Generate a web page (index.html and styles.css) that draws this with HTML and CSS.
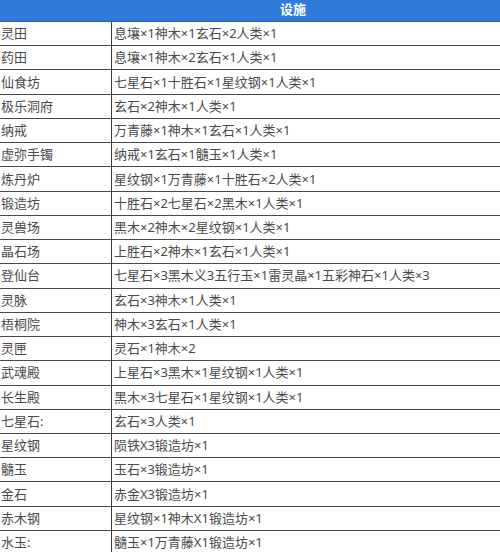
FILE: index.html
```html
<!DOCTYPE html>
<html lang="zh">
<head>
<meta charset="utf-8">
<link rel="stylesheet" href="styles.css">
</head>
<body>
<div class="sheet">
  <div class="head"><span class="head-title">设施</span></div>
  <div class="rows">
    <div class="row"><div class="c1">灵田</div><div class="c2">息壤×1神木×1玄石×2人类×1</div></div>
    <div class="row"><div class="c1">药田</div><div class="c2">息壤×1神木×2玄石×1人类×1</div></div>
    <div class="row"><div class="c1">仙食坊</div><div class="c2">七星石×1十胜石×1星纹钢×1人类×1</div></div>
    <div class="row"><div class="c1">极乐洞府</div><div class="c2">玄石×2神木×1人类×1</div></div>
    <div class="row"><div class="c1">纳戒</div><div class="c2">万青藤×1神木×1玄石×1人类×1</div></div>
    <div class="row"><div class="c1">虚弥手镯</div><div class="c2">纳戒×1玄石×1髓玉×1人类×1</div></div>
    <div class="row"><div class="c1">炼丹炉</div><div class="c2">星纹钢×1万青藤×1十胜石×2人类×1</div></div>
    <div class="row"><div class="c1">锻造坊</div><div class="c2">十胜石×2七星石×2黑木×1人类×1</div></div>
    <div class="row"><div class="c1">灵兽场</div><div class="c2">黑木×2神木×2星纹钢×1人类×1</div></div>
    <div class="row"><div class="c1">晶石场</div><div class="c2">上胜石×2神木×1玄石×1人类×1</div></div>
    <div class="row"><div class="c1">登仙台</div><div class="c2">七星石×3黑木义3五行玉×1雷灵晶×1五彩神石×1人类×3</div></div>
    <div class="row"><div class="c1">灵脉</div><div class="c2">玄石×3神木×1人类×1</div></div>
    <div class="row"><div class="c1">梧桐院</div><div class="c2">神木×3玄石×1人类×1</div></div>
    <div class="row"><div class="c1">灵匣</div><div class="c2">灵石×1神木×2</div></div>
    <div class="row"><div class="c1">武魂殿</div><div class="c2">上星石×3黑木×1星纹钢×1人类×1</div></div>
    <div class="row"><div class="c1">长生殿</div><div class="c2">黑木×3七星石×1星纹钢×1人类×1</div></div>
    <div class="row"><div class="c1">七星石:</div><div class="c2">玄石×3人类×1</div></div>
    <div class="row"><div class="c1">星纹钢</div><div class="c2">陨铁X3锻造坊×1</div></div>
    <div class="row"><div class="c1">髓玉</div><div class="c2">玉石×3锻造坊×1</div></div>
    <div class="row"><div class="c1">金石</div><div class="c2">赤金X3锻造坊×1</div></div>
    <div class="row"><div class="c1">赤木钢</div><div class="c2">星纹钢×1神木X1锻造坊×1</div></div>
    <div class="row"><div class="c1">水玉:</div><div class="c2">髓玉×1万青藤X1锻造坊×1</div></div>
  </div>
</div>
</body>
</html>
```

FILE: styles.css
```css
html, body {
  margin: 0;
  padding: 0;
  background: #ffffff;
}
body {
  width: 500px;
  height: 552px;
  overflow: hidden;
  font-family: "Noto Sans", "Noto Sans CJK SC", sans-serif;
  font-size: 13px;
  color: #4a4a4a;
}
.sheet {
  display: flex;
  flex-direction: column;
}
.head {
  height: 21px;
  background: #2f7bd9;
  border-bottom: 1px solid #1f5eb0;
  display: flex;
  align-items: center;
  padding-left: 280px;
}
.head-title {
  color: #ffffff;
  font-weight: bold;
  font-size: 13px;
  line-height: 1;
  margin-top: -2px;
}
.rows {
  display: grid;
  grid-auto-rows: 24.24px;
}
.row {
  display: grid;
  grid-template-columns: 112px 1fr;
  border-bottom: 1px solid #4a4a4a;
  box-sizing: border-box;
}
.c1, .c2 {
  display: flex;
  align-items: center;
  white-space: nowrap;
  line-height: 1;
}
.c1 {
  padding-left: 1px;
  border-right: 1px solid #3a3a3a;
}
.c2 {
  padding-left: 2px;
}
```
